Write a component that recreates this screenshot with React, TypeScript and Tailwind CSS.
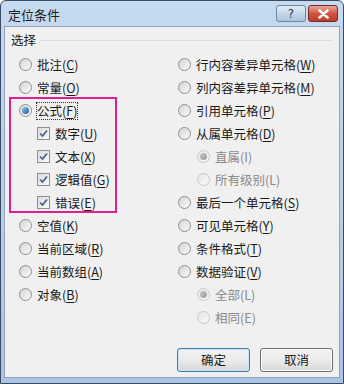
import React from "react";

const font = { fontFamily: '"Microsoft YaHei", "Noto Sans CJK SC", "Noto Sans", sans-serif' };

function Radio({ checked = false, disabled = false }: { checked?: boolean; disabled?: boolean }) {
  return (
    <span
      className={
        "relative inline-flex h-[13px] w-[13px] shrink-0 items-center justify-center rounded-full border " +
        (disabled
          ? "border-[#c8c8c8] bg-gradient-to-br from-[#e6e6e6] to-[#fafafa]"
          : "border-[#8f8f8f] bg-gradient-to-br from-[#d4d4d4] to-[#fbfbfb]")
      }
    >
      {checked && (
        <span
          className={
            "h-[7px] w-[7px] rounded-full " +
            (disabled
              ? "bg-gradient-to-br from-[#c8c8c8] to-[#9a9a9a]"
              : "bg-gradient-to-br from-[#8fc3ef] to-[#1d5a9c]")
          }
        />
      )}
    </span>
  );
}

function Check() {
  return (
    <span className="inline-flex h-[13px] w-[13px] shrink-0 items-center justify-center border border-[#8f8f8f] bg-gradient-to-br from-[#dcdcdc] to-[#fafafa]">
      <svg width="9" height="9" viewBox="0 0 9 9">
        <path d="M1 4.5 L3.5 7 L8 1.5" fill="none" stroke="#4a5f8a" strokeWidth="1.7" />
      </svg>
    </span>
  );
}

function Label({ text, k, disabled = false, focus = false }: { text: string; k: string; disabled?: boolean; focus?: boolean }) {
  return (
    <span
      className={
        "text-[12.5px] leading-[16px] " +
        (disabled ? "text-[#8a8a8a] " : "text-[#1a1a1a] ") +
        (focus ? "outline outline-1 outline-dotted outline-[#333]" : "")
      }
    >
      {text}(<span className={disabled ? "" : "underline underline-offset-2"}>{k}</span>)
    </span>
  );
}

function RRow({ text, k, checked, disabled, focus, indent = false }: { text: string; k: string; checked?: boolean; disabled?: boolean; focus?: boolean; indent?: boolean }) {
  return (
    <div className={"flex h-[23px] items-center gap-[5px] " + (indent ? "pl-[19px]" : "")}>
      <Radio checked={checked} disabled={disabled} />
      <Label text={text} k={k} disabled={disabled} focus={focus} />
    </div>
  );
}

function CRow({ text, k }: { text: string; k: string }) {
  return (
    <div className="flex h-[23px] items-center gap-[5px] pl-[18px]">
      <Check />
      <Label text={text} k={k} />
    </div>
  );
}

export default function App() {
  return (
    <div className="h-[384px] w-[344px] overflow-hidden" style={font}>
      <div className="flex h-full w-full flex-col rounded-t-[6px] border border-[#3b4c60] bg-gradient-to-b from-[#c6daf0] via-[#b8d0ea] to-[#a9c5e5]">
        {/* Title bar */}
        <div className="flex h-[25px] shrink-0 items-start justify-between pl-[7px] pr-[5px]">
          <span className="mt-[5px] text-[13px] leading-[18px] text-[#1e1e1e]">定位条件</span>
          <div className="mt-[4px] flex items-start gap-[2px]">
            <div className="flex h-[17px] w-[30px] items-center justify-center rounded-[3px] border border-[#6f86a3] bg-gradient-to-b from-[#e3ecf6] via-[#c6d6e9] to-[#aec4de] text-[12px] leading-none text-[#2d3e52]" style={{ fontFamily: '"DejaVu Sans", sans-serif' }}>
              ?
            </div>
            <div className="flex h-[17px] w-[30px] items-center justify-center rounded-[3px] border border-[#7a2a22] bg-gradient-to-b from-[#eaa898] via-[#d1553f] to-[#c23c28]">
              <svg width="13" height="10" viewBox="0 0 13 10">
                <path d="M2.5 1.5 L10.5 8.5 M10.5 1.5 L2.5 8.5" stroke="#fff" strokeWidth="2.6" strokeLinecap="round" />
              </svg>
            </div>
          </div>
        </div>
        {/* Content */}
        <div className="mx-[3px] mb-[5px] flex-1 border border-[#8fa5bf] bg-[#f0f0f0]">
          <div className="px-[6px] pt-[4px]">
            <div className="flex items-center gap-[4px]">
              <span className="text-[12.5px] leading-[18px] text-[#1a1a1a]">选择</span>
              <div className="h-px flex-1 border-t border-[#d5dfe5]" />
            </div>
            <div className="mt-[4px] flex">
              <div className="w-[165px] pl-[8px]">
                <RRow text="批注" k="C" />
                <RRow text="常量" k="O" />
                <div className="relative">
                  <RRow text="公式" k="F" checked focus />
                  <CRow text="数字" k="U" />
                  <CRow text="文本" k="X" />
                  <CRow text="逻辑值" k="G" />
                  <CRow text="错误" k="E" />
                  {/* annotation box */}
                  <div className="pointer-events-none absolute left-[-10px] top-[-2px] bottom-[1px] w-[108px] border-2 border-[#e0208e]" />
                </div>
                <RRow text="空值" k="K" />
                <RRow text="当前区域" k="R" />
                <RRow text="当前数组" k="A" />
                <RRow text="对象" k="B" />
              </div>
              <div className="flex-1 pl-[2px]">
                <RRow text="行内容差异单元格" k="W" />
                <RRow text="列内容差异单元格" k="M" />
                <RRow text="引用单元格" k="P" />
                <RRow text="从属单元格" k="D" />
                <RRow text="直属" k="I" checked disabled indent />
                <RRow text="所有级别" k="L" disabled indent />
                <RRow text="最后一个单元格" k="S" />
                <RRow text="可见单元格" k="Y" />
                <RRow text="条件格式" k="T" />
                <RRow text="数据验证" k="V" />
                <RRow text="全部" k="L" checked disabled indent />
                <RRow text="相同" k="E" disabled indent />
              </div>
            </div>
          </div>
          <div className="mt-[19px] flex justify-end gap-[10px] pr-[6px]">
            <button className="h-[24px] w-[73px] rounded-[3px] border border-[#3c7fb1] bg-gradient-to-b from-[#f2f2f2] via-[#ebebeb] to-[#d8d8d8] text-[12.5px] text-[#1a1a1a] shadow-[inset_0_0_0_1px_#c9e6f8]">
              确定
            </button>
            <button className="h-[24px] w-[73px] rounded-[3px] border border-[#707070] bg-gradient-to-b from-[#f2f2f2] via-[#ebebeb] to-[#d8d8d8] text-[12.5px] text-[#1a1a1a] shadow-[inset_0_0_0_1px_#fcfcfc]">
              取消
            </button>
          </div>
        </div>
      </div>
    </div>
  );
}
